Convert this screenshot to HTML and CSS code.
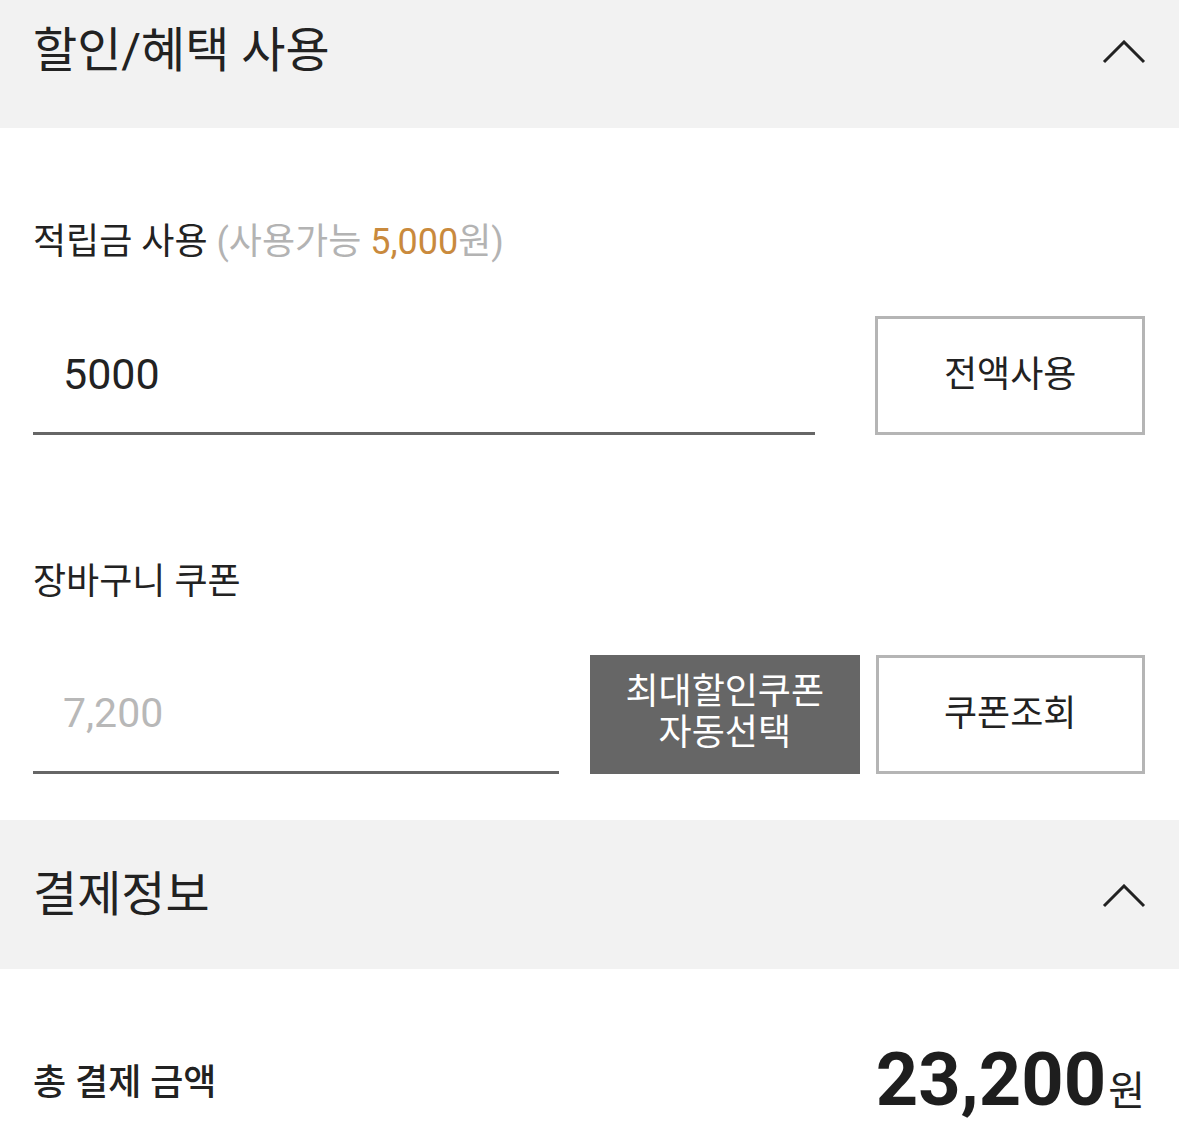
FILE: index.html
```html
<!DOCTYPE html>
<html lang="ko">
<head>
<meta charset="utf-8">
<title>할인/혜택 사용</title>
<link rel="stylesheet" href="styles.css">
</head>
<body>
<section class="panel">
  <header class="panel-head panel-head--first">
    <h2 class="panel-title">할인/혜택 사용</h2>
    <svg class="chevron" width="44" height="24" viewBox="0 0 44 24"><polyline points="2,22 22,2 42,22" fill="none" stroke="#222" stroke-width="3"/></svg>
  </header>
  <div class="panel-body panel-body--discount">
    <div class="field-label">적립금 사용 <span class="muted">(사용가능 <span class="accent">5,000</span>원)</span></div>
    <div class="field-row field-row--points">
      <div class="field-input field-input--wide">5000</div>
      <button class="btn btn-outline">전액사용</button>
    </div>
    <div class="field-label field-label--coupon">장바구니 쿠폰</div>
    <div class="field-row field-row--coupon">
      <div class="field-input field-input--short placeholder">7,200</div>
      <button class="btn btn-dark">최대할인쿠폰<br>자동선택</button>
      <button class="btn btn-outline">쿠폰조회</button>
    </div>
  </div>
</section>
<section class="panel">
  <header class="panel-head panel-head--second">
    <h2 class="panel-title">결제정보</h2>
    <svg class="chevron" width="44" height="24" viewBox="0 0 44 24"><polyline points="2,22 22,2 42,22" fill="none" stroke="#222" stroke-width="3"/></svg>
  </header>
  <div class="panel-body panel-body--pay">
    <div class="total-row">
      <span class="total-label">총 결제 금액</span>
      <span class="total-amount"><span class="total-num">23,200</span><span class="total-unit">원</span></span>
    </div>
  </div>
</section>
</body>
</html>
```

FILE: styles.css
```css
html, body {
  margin: 0;
  padding: 0;
  overflow: hidden;
  background: #fff;
}
body {
  font-family: Roboto, "Noto Sans CJK KR", sans-serif;
  color: #222;
}
.panel-head {
  background: #f2f2f2;
  display: flex;
  align-items: center;
  justify-content: space-between;
  padding: 0 33px;
  box-sizing: border-box;
}
.panel-head--first {
  height: 128px;
  padding-bottom: 26px;
}
.panel-head--second {
  height: 149px;
}
.panel-title {
  margin: 0;
  font-size: 48px;
  font-weight: 400;
  line-height: 56px;
  color: #222;
}
.chevron {
  display: block;
  margin-top: 2px;
}
.panel-body {
  padding: 0 34px 0 33px;
}
.panel-body--discount {
  padding-top: 94px;
  padding-bottom: 46px;
}
.field-label {
  font-size: 36px;
  line-height: 40px;
  color: #222;
}
.field-label--coupon {
  margin-top: 127px;
}
.muted {
  color: #b3b3b3;
}
.accent {
  color: #c98a3d;
}
.field-row {
  display: flex;
  align-items: stretch;
  height: 119px;
}
.field-row--points {
  margin-top: 54px;
  gap: 60px;
}
.field-row--coupon {
  margin-top: 53px;
}
.field-input {
  box-sizing: border-box;
  border-bottom: 3px solid #666;
  padding-left: 30px;
  display: flex;
  align-items: center;
  font-size: 43px;
  color: #222;
}
.field-input--wide {
  width: 783px;
}
.field-input--short {
  width: 527px;
  margin-right: 31px;
  font-size: 41px;
}
.placeholder {
  color: #b8b8b8;
}
.btn {
  box-sizing: border-box;
  width: 270px;
  font-family: Roboto, "Noto Sans CJK KR", sans-serif;
  font-size: 36px;
  line-height: 41px;
  padding: 0;
  cursor: pointer;
}
.btn-outline {
  background: #fff;
  border: 3px solid #b5b5b5;
  color: #222;
}
.btn-dark {
  background: #666;
  border: none;
  color: #fff;
  margin-right: 16px;
  padding-bottom: 4px;
}
.panel-body--pay {
  padding-top: 60px;
  padding-bottom: 12px;
}
.total-row {
  height: 100px;
  display: flex;
  align-items: center;
  justify-content: space-between;
}
.total-label {
  font-size: 36px;
  font-weight: 500;
  color: #222;
}
.total-amount {
  display: flex;
  align-items: baseline;
  gap: 2px;
}
.total-num {
  font-size: 74px;
  font-weight: 700;
  color: #1e1e1e;
}
.total-unit {
  font-size: 40px;
  color: #222;
}
```
